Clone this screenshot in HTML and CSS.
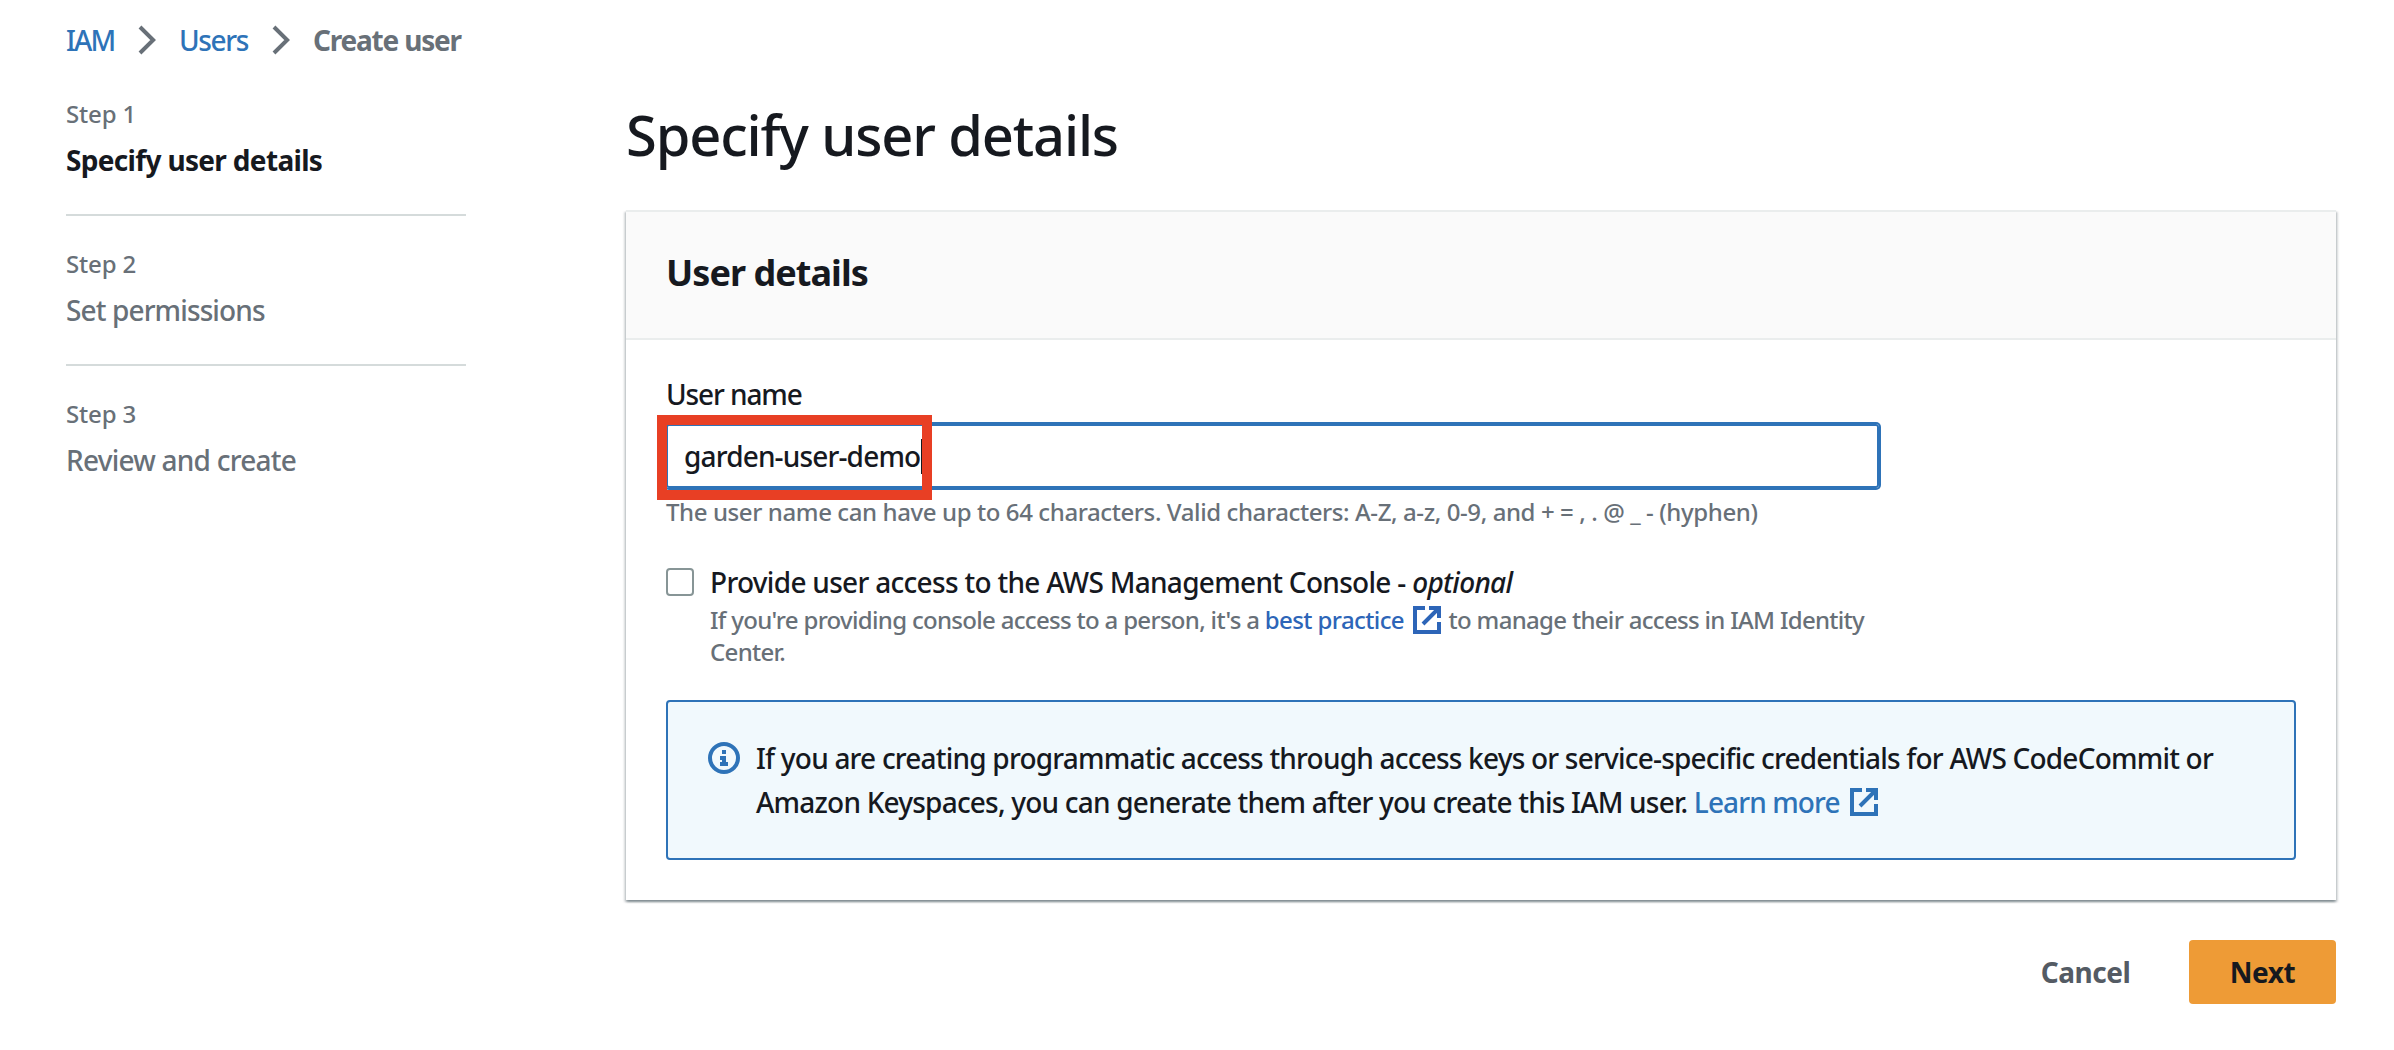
FILE: index.html
```
<!DOCTYPE html>
<html lang="en">
<head>
<meta charset="utf-8">
<title>Create user | IAM</title>
<link rel="stylesheet" href="styles.css">
</head>
<body>
<svg class="sprite" aria-hidden="true">
  <symbol id="chevron" viewBox="0 0 18 30"><path d="M2 2 15.2 15 2 28" fill="none" stroke="currentColor" stroke-width="4"/></symbol>
  <symbol id="external" viewBox="0 0 28 28"><path d="M12 2H2v24h24V16M16 2h10v10M25.5 2.5 10 18" fill="none" stroke="currentColor" stroke-width="4"/></symbol>
  <symbol id="info" viewBox="0 0 32 32"><circle cx="16" cy="16" r="14" fill="none" stroke="currentColor" stroke-width="4"/><path fill="currentColor" d="M14 8h4v4h-4zM12 14h6v6h2v4h-8v-4h2v-2h-2z"/></symbol>
</svg>
<nav class="breadcrumbs">
  <a class="crumb iam" href="#">IAM</a>
  <svg class="chevron"><use href="#chevron"/></svg>
  <a class="crumb users" href="#">Users</a>
  <svg class="chevron"><use href="#chevron"/></svg>
  <span class="crumb current">Create user</span>
</nav>
<div class="layout">
  <ol class="steps">
    <li class="step active"><div class="step-label">Step 1</div><div class="step-name">Specify user details</div></li>
    <li class="step"><div class="step-label">Step 2</div><div class="step-name">Set permissions</div></li>
    <li class="step"><div class="step-label">Step 3</div><div class="step-name review">Review and create</div></li>
  </ol>
  <main class="content">
    <h1 class="title">Specify user details</h1>
    <section class="card">
      <header class="card-header"><h2 class="card-title">User details</h2></header>
      <div class="card-body">
        <div class="field">
          <div class="field-label">User name</div>
          <div class="input"><span class="value">garden-user-demo</span><span class="caret"></span><span class="highlight"></span></div>
          <div class="hint">The user name can have up to 64 characters. Valid characters: A-Z, a-z, 0-9, and + = , . @ _ - (hyphen)</div>
        </div>
        <div class="option">
          <span class="checkbox" role="checkbox" aria-checked="false"></span>
          <div class="option-text">
            <div class="option-label">Provide user access to the AWS Management Console - <em>optional</em></div>
            <div class="option-desc">If you're providing console access to a person, it's a <a class="link-dark" href="#">best practice<svg class="external"><use href="#external"/></svg></a> to manage their access in IAM Identity<br>Center.</div>
          </div>
        </div>
        <div class="alert">
          <svg class="info"><use href="#info"/></svg>
          <div class="alert-text">If you are creating programmatic access through access keys or service-specific credentials for AWS CodeCommit or<br>Amazon Keyspaces, you can generate them after you create this IAM user. <a class="link" href="#">Learn more<svg class="external"><use href="#external"/></svg></a></div>
        </div>
      </div>
    </section>
    <footer class="actions">
      <button class="button cancel">Cancel</button>
      <button class="button next">Next</button>
    </footer>
  </main>
</div>
</body>
</html>
```
FILE: styles.css
```
* { box-sizing: border-box; }
body {
  margin: 0;
  padding: 20px 58px 0 66px;
  background: #fff;
  color: #16191f;
  font: 500 28px/44px "Noto Sans", "Open Sans", sans-serif;
  letter-spacing: -0.7px;
  white-space: nowrap;
}
a { color: #2e73b8; text-decoration: none; }
h1, h2, ol { margin: 0; padding: 0; }
.sprite { position: absolute; width: 0; height: 0; }

.breadcrumbs { display: flex; align-items: center; height: 40px; line-height: 40px; color: #687078; }
.crumb { display: block; }
.iam { width: 48px; letter-spacing: -1.9px; }
.users { width: 69px; letter-spacing: -1.35px; }
.current { font-weight: 700; letter-spacing: -1.2px; }
.chevron { width: 18px; height: 30px; margin: 0 23.5px; }

.layout { display: flex; gap: 160px; padding-top: 38px; }
.steps { width: 400px; list-style: none; color: #687078; }
.step { padding-bottom: 32px; margin-bottom: 32px; border-bottom: 2px solid #d5dbdb; }
.step:last-child { border: 0; }
.step-label { margin-bottom: 8px; font-size: 24px; line-height: 32px; letter-spacing: -0.15px; }
.step-name { letter-spacing: -0.88px; }
.review { letter-spacing: -0.77px; }
.active .step-name { color: #16191f; font-weight: 700; letter-spacing: -0.67px; }

.content { flex: 1; }
.title { margin-bottom: 40px; font-size: 56px; font-weight: 500; line-height: 72px; letter-spacing: -1.15px; }
.card {
  height: 690px;
  border-top: 2px solid #eaeded;
  background: #fff;
  box-shadow: 0 2px 2px rgba(0, 28, 36, .3), 2px 2px 2px rgba(0, 28, 36, .15), -2px 2px 2px rgba(0, 28, 36, .15);
}
.card-header { padding: 39px 40px 43px; border-bottom: 2px solid #eaeded; background: #fafafa; }
.card-title { font-size: 36px; font-weight: 700; line-height: 44px; letter-spacing: -0.95px; }
.card-body { padding: 32px 40px 40px; }
.field { width: 1213px; }
.field-label { letter-spacing: -1.1px; }
.input {
  position: relative;
  display: flex;
  align-items: center;
  height: 64px;
  margin: 8px 0;
  padding: 0 16px;
  border: 2px solid #2e73b8;
  border-radius: 3px;
  box-shadow: 0 0 0 2px #2e73b8;
}
.value { width: 237px; letter-spacing: -0.84px; }
.caret { width: 2px; height: 35px; background: #16191f; }
.highlight { position: absolute; left: -11px; top: -11px; width: 275px; height: 85px; border: 10px solid #e83f24; }
.hint { color: #687078; font-size: 24px; line-height: 32px; letter-spacing: -0.4px; }
.option { display: flex; gap: 16px; margin-top: 31px; }
.checkbox { width: 28px; height: 28px; margin-top: 9px; border: 2px solid #879596; border-radius: 4px; }
.option-label { padding-top: 1px; }
.option-desc { color: #687078; font-size: 24px; line-height: 32px; letter-spacing: -0.69px; }
.link-dark { color: #2d65b8; letter-spacing: -0.6px; }
.external { width: 28px; height: 28px; margin: -10px 2px -10px 9px; vertical-align: 5px; }
.link { letter-spacing: -0.9px; }
.link .external { margin-left: 10px; vertical-align: 7px; }
.alert {
  display: flex;
  gap: 16px;
  height: 160px;
  margin-top: 32px;
  padding: 34px 40px;
  border: 2px solid #2e73b8;
  border-radius: 4px;
  background: #f1f9fd;
}
.alert-text { letter-spacing: -0.79px; }
.info { width: 32px; height: 32px; margin-top: 6px; color: #2e73b8; }

.actions { display: flex; justify-content: flex-end; gap: 20px; margin-top: 40px; }
.button { height: 64px; padding: 0; border: 0; border-radius: 4px; font: 700 28px/40px "Noto Sans", sans-serif; letter-spacing: -0.5px; }
.cancel { width: 167px; background: none; color: #545b64; }
.next { width: 147px; background: #ee9b36; color: #16191f; }
```
